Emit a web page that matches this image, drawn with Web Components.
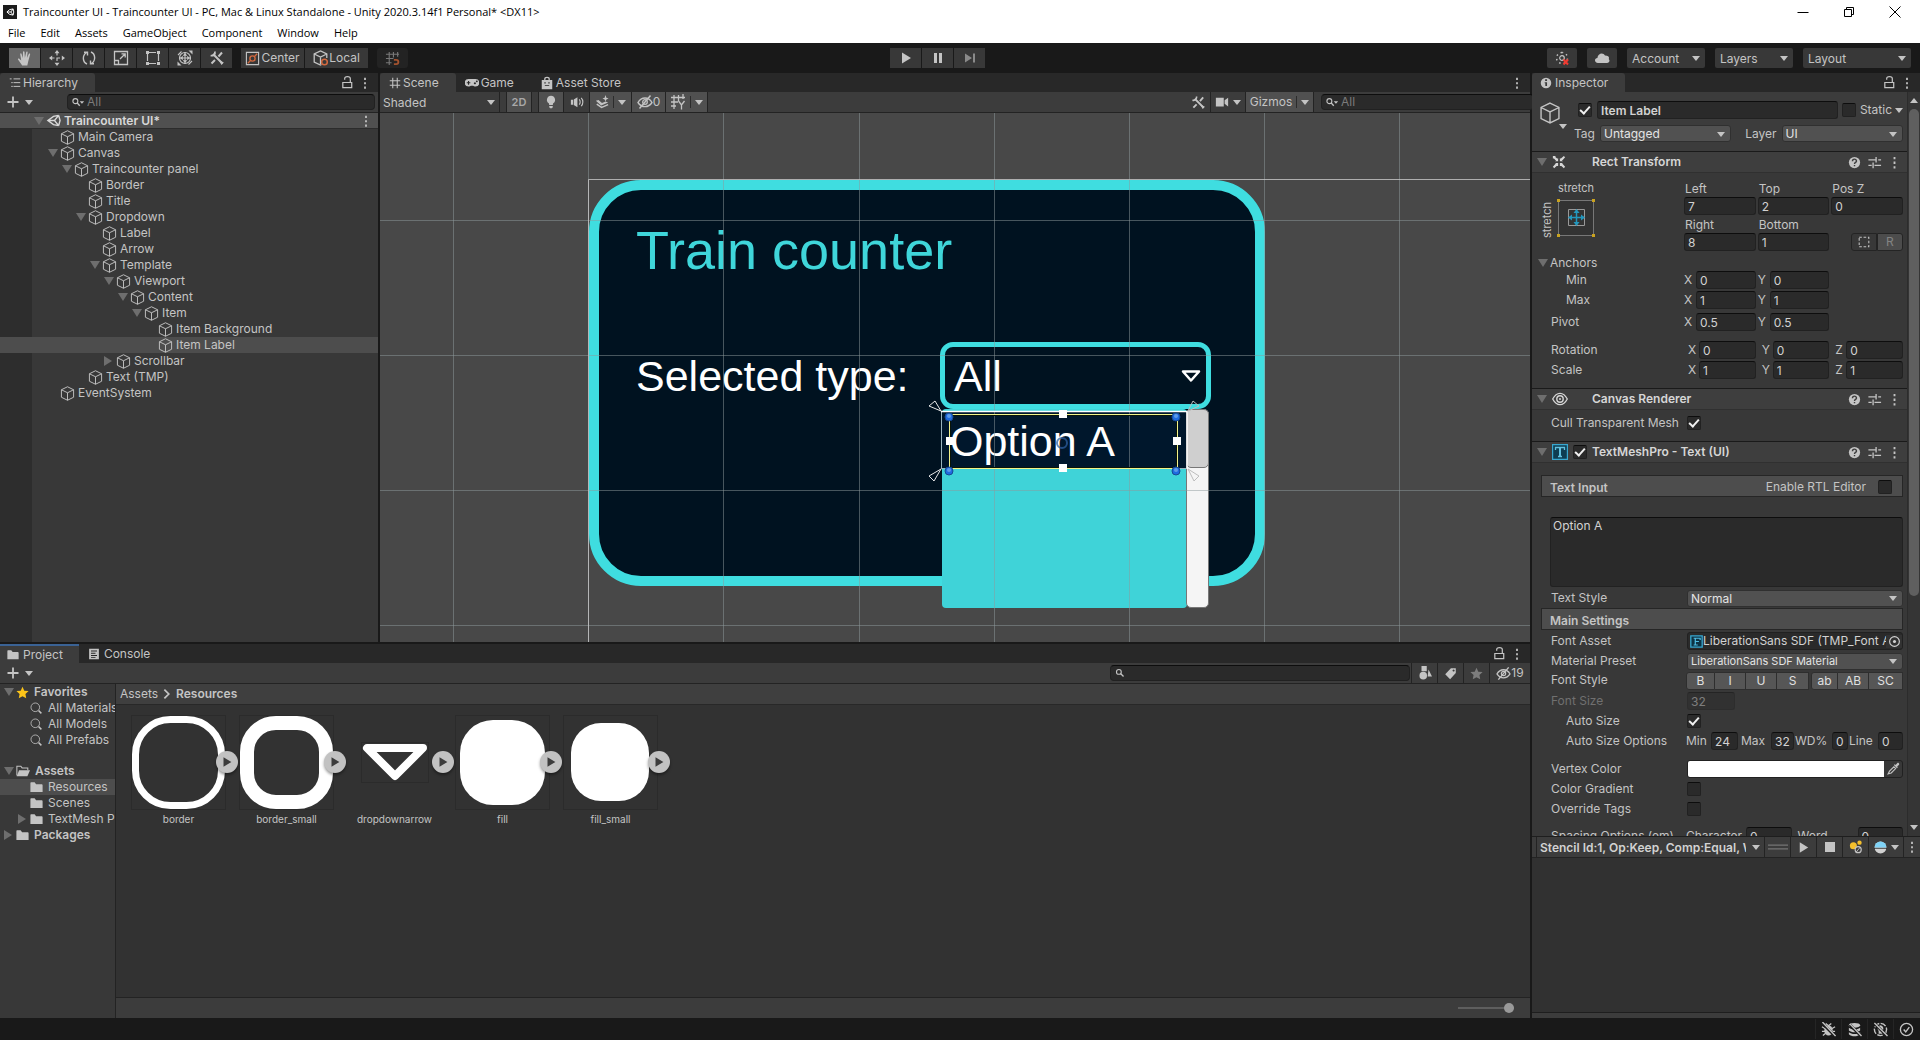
<!DOCTYPE html>
<html lang="en">
<head>
<meta charset="utf-8">
<title>Traincounter UI - Unity</title>
<style>
html,body{margin:0;height:100%;background:#191919}
body{font-family:Inter,"Liberation Sans",sans-serif;font-size:12px;line-height:16px;color:#c4c4c4;overflow:hidden}
</style>
</head>
<body>
<unity-editor></unity-editor>
<script>
const BASE = `
*{box-sizing:border-box}
button,input,select,textarea{font:inherit;color:inherit;border:0;padding:0;margin:0;background:none;border-radius:0;outline:0;min-width:0}
button{display:inline-flex;align-items:center;justify-content:center;white-space:nowrap}
select{appearance:none;width:100%}
svg{display:block}
`;
function define(name, css, render) {
  customElements.define(name, class extends HTMLElement {
    constructor() { super(); this.attachShadow({ mode: 'open' }); }
    connectedCallback() {
      this.shadowRoot.innerHTML = `<style>${BASE}${css}</style>${render(this)}`;
    }
  });
}
const attr = (el, n, d = '') => el.getAttribute(n) ?? d;

const s = 'fill="none" stroke="currentColor"';
const ICONS = {
  hand: '<path fill="currentColor" d="M5.2 15.5 1 9.6c-.4-.8.7-1.5 1.3-.9l1.9 1.9L3.200 4.200c-.1-1 1.2-1.200 1.400-.3L5.800 7.900 6 2c0-1 1.400-1 1.500 0l.4 5.700L9.200 2.200c.2-1 1.600-.7 1.400.3L9.900 8l1.900-4c.4-.9 1.600-.4 1.300.5l-1.900 7-.9 4z"/>',
  move: `<path ${s} stroke-width="1.200" stroke-dasharray="3.500 2" d="M8 2v12M2 8h12"/><path fill="currentColor" d="M8 0l2.500 3.200h-5zM8 16l2.500-3.200h-5zM0 8l3.200-2.500v5zM16 8l-3.200-2.500v5z"/>`,
  rotate: `<path ${s} stroke-width="1.400" d="M6 14C1.500 12 1 5.500 5.500 2.500M10 2c4.500 2 5 8.500.5 11.500M3 2.200h3.500v3.300M13 13.800H9.500v-3.300"/>`,
  scale: `<path ${s} stroke-width="1.300" d="M1.500 1.500h13v13h-13zM1.500 10.500h4v4M7 9l5-5M8.500 3.800h3.700v3.700"/>`,
  rect: `<path ${s} stroke-width="1.200" d="M3 2.500h10M3 13.500h10M2.500 3v10M13.500 3v10" stroke-dasharray="8 2"/><path fill="currentColor" d="M1 1h3v3H1zM12 1h3v3h-3zM1 12h3v3H1zM12 12h3v3h-3z"/>`,
  multi: `<circle cx="8" cy="8" r="5.500" ${s} stroke-width="1.200"/><path ${s} stroke-width="1.100" d="M8 2v12M2 8h12M1 5 4.500 1.500M15 11l-3.500 3.500"/><path fill="currentColor" d="M8 3l2.300 2.800H5.700zM8 13l2.300-2.800H5.700zM3 8l2.800-2.300v4.600zM13 8l-2.800-2.300v4.600zM11.500.5H15.500v4zM.5 11.500v4h4z"/>`,
  tools: `<path ${s} stroke-width="2" d="M4 4l9.500 9.500M13 2.500l-3.500 4M6 10l-3.500 3.500"/><path ${s} stroke-width="1.800" d="M5.800 1.500c.8 2.500-1.500 4.800-4.200 4"/><path fill="currentColor" d="M9.500 9.800 14.800 12.500 12.500 15z"/>`,
  center: `<path ${s} stroke-width="1.200" d="M1.500 1.500h13v13h-13z"/><circle cx="8" cy="8" r="2.800" fill="none" stroke="#d3693f" stroke-width="1.500"/><path stroke="#d3693f" stroke-width="1.400" d="M10 6l3-3M3 13l3-3"/>`,
  local: `<path ${s} stroke-width="1.300" d="M8.500 14.500 7.500 15 1.200 12V4L7.500 1l6.300 3v4M1.200 4l6.300 3 6.300-3M7.500 7v7"/><circle cx="11.500" cy="12" r="2.800" fill="none" stroke="#d3693f" stroke-width="1.500"/>`,
  snap: `<path fill="none" stroke="#787878" stroke-width="1.200" d="M4.500 1v14M9 1v6M13.500 1v5M1 3.500h14M1 8h8M1 12.500h6"/><path fill="none" stroke="#a4532f" stroke-width="2" d="M9.500 9.500h2.500c3 0 3 4.500 0 4.500H9.500"/>`,
  play: '<path fill="currentColor" d="M4 2.500 13 8l-9 5.500z"/>',
  pause: '<path fill="currentColor" d="M4 3h3v10H4zM9 3h3v10H9z"/>',
  step: '<path fill="#8a8a8a" d="M3 3.500 10 8l-7 4.500zM11 3.500h2v9h-2z"/>',
  stop: '<path fill="currentColor" d="M3 3h10v10H3z"/>',
  lightx: `<circle cx="8" cy="8" r="2.300" ${s} stroke-width="1.200"/><path ${s} stroke-width="1.500" stroke-dasharray="1.500 3.200" d="M8 2.500a5.500 5.500 0 1 0 .1 0"/><path stroke="#f03a30" stroke-width="2" d="M9.500 9.500l4.500 5M14 9.500l-4.500 5"/>`,
  cloud: '<path fill="currentColor" d="M4 13c-4-.2-3.800-5-.6-5C3.800 3 9.500 2 11 5.600c4 0 4.500 2 3.700 3.500C16.500 11 15 13 13 13z"/>',
  hier: `<path ${s} stroke-width="1.300" d="M1 2.500h2.500M6 2.500h9M6 7.500h9M6 12.500h9M3 7.500h2M3 12.500h2"/>`,
  lock: `<path ${s} stroke-width="1.300" d="M3 8h9.500v5.500H3zM5 5V3.800C5 .9 11 .9 11 3.800V8"/>`,
  kebab: '<path fill="currentColor" d="M7 2h2v2.500H7zM7 7h2v2.500H7zM7 12h2v2.500H7z"/>',
  plus: '<path stroke="currentColor" stroke-width="1.800" d="M8 2.500v11M2.500 8h11"/>',
  search: `<circle cx="6.500" cy="6.500" r="3.200" ${s} stroke-width="1.500"/><path ${s} stroke-width="1.800" d="M8.700 8.700l4 4"/>`,
  searchv: `<circle cx="5" cy="7" r="2.800" ${s} stroke-width="1.300"/><path ${s} stroke-width="1.600" d="M7 9l3 3.200"/><path fill="currentColor" d="M10 7h5l-2.500 3z"/>`,
  searchbig: `<circle cx="6.500" cy="6.500" r="5.300" ${s}/><path ${s} stroke-width="1.800" d="M10.500 10.500l3.500 3.500"/>`,
  cube: `<path ${s} d="M8 .8 14.500 4v8L8 15.200 1.500 12V4zM1.500 4 8 7.200 14.500 4M8 7.200v8"/>`,
  unity: `<path ${s} stroke-width="1.500" d="M13.500 2.500 8 3.600 2 8l6 4.400 5.500 1.100M13.500 2.500 15 8l-1.500 5.500M2 8h7M13.500 2.500 9 8l4.500 5.500"/>`,
  grid: `<path ${s} stroke-width="1.400" d="M5 1v14M11 1v14M1 5h14M1 11h14"/>`,
  game: '<path fill="currentColor" fill-rule="evenodd" d="M4 3.500h8a4.300 4.300 0 0 1 0 8.600c-1.500 0-2-1-2.700-1H6.700c-.7 0-1.200 1-2.700 1a4.300 4.300 0 0 1 0-8.600zM3.400 5.600v1.500H2v1.300h1.400v1.500h1.300V8.400h1.400V7.100H4.700V5.600zM11.300 7a1.200 1.200 0 1 0 .01 0zM13.500 5a1 1 0 1 0 .01 0z"/>',
  bag: `<path ${s} stroke-width="1.500" d="M5.500 5V3.500c0-2.500 5-2.500 5 0V5"/><path fill="currentColor" fill-rule="evenodd" d="M2 4.500h12V15H2zM5 7v1.500h1.500V7zM9.500 7v1.500H11V7zM5.500 10.500v1h5v-1z"/>`,
  bulb: '<path fill="currentColor" d="M8 1a4.600 4.600 0 0 1 2.500 8.500L10 11.500H6L5.500 9.500A4.600 4.600 0 0 1 8 1zM6 12.500h4V14L9 15H7l-1-1z"/>',
  audio: `<path fill="currentColor" d="M1 5.500h2.500V11H1zM4.300 5 8.500 2.500V14L4.300 11.500z"/><path ${s} stroke-width="1.300" d="M10.500 5c1.500 1.500 1.500 4.500 0 6M12.800 3.300c2.500 2.500 2.500 7 0 9.500"/>`,
  fx: `<path fill="currentColor" d="M1 6.500 4 5.800 8 9l4-1.500 3 1L7 12zM12 0l1 3 2.500 1L13 5l-1 2.500L11 5 8.500 4 11 3z"/><path ${s} stroke-width="1.600" d="M2 10.500l5.500 3.700L15 11"/>`,
  eyeoff: `<path ${s} stroke-width="1.400" d="M1 8.500c3.500-6 10.500-6 14 0-3.500 5.500-10.500 5.500-14 0z"/><circle cx="8" cy="8" r="2.300" ${s} stroke-width="1.300"/><path ${s} stroke-width="1.500" d="M13.500 1.500l-11 13"/>`,
  gridy: `<path ${s} stroke-width="1.300" d="M4 1v14M8.500 1v6M13 0v5M1 3.500h14M1 8h7M1 12h5M8.500 7l3 4 3-4M11.500 11v4.500"/>`,
  camera: '<path fill="currentColor" d="M1 3h9v10H1zM11 6l4-3v10l-4-3z"/>',
  info: '<circle cx="8" cy="8" r="6" fill="currentColor"/><path fill="#3c3c3c" d="M7 3.800h2.200v2H7zM6.500 7h2.700v4.500h-2V8.200h-.7z"/>',
  help: `<circle cx="8" cy="8" r="6" fill="currentColor"/><path fill="none" stroke="#3e3e3e" stroke-width="1.500" d="M5.800 6.600c0-3 4.400-2.700 4.300-.1C10 8 8 7.900 8 9.500M8 10.600v1.500"/>`,
  preset: `<path ${s} stroke-width="1.400" d="M1.500 5.200H9M12 5.200h3M9.700 2v6M1.500 11H5M8 11h7M6.500 8v6"/>`,
  rectt: '<path fill="currentColor" d="M2.500 1 6.800 4.800 4.800 6.800 1 2.500zM1 1h3v1L2 4H1zM13.500 1 9.200 4.800l2 2L15 2.500zM2.500 15l4.300-3.800-2-2L1 13.500zM13.500 15l-4.300-3.800 2-2 3.800 4.300zM7 3.500v3.500H3.500zM9 3.500v3.500h3.500zM7 12.500V9H3.500zM9 12.500V9h3.500z"/>',
  eye: `<path ${s} stroke-width="1.300" d="M.7 8C3 3.600 5.500 2.300 8 2.300S13 3.600 15.300 8C13 12.400 10.500 13.700 8 13.700S3 12.400.7 8z"/><circle cx="8" cy="8" r="3.200" ${s} stroke-width="1.400"/><circle cx="8" cy="8" r="1" fill="currentColor"/>`,
  tmp: '<path fill="#0d3d52" stroke="#38a8d0" stroke-width="1.200" d="M.6.600h14.800v14.800H.6z"/><path fill="none" stroke="#62c0de" stroke-width="1.300" d="M3.500 6V3.500h9V6M6 12.500h4"/><path stroke="#62c0de" stroke-width="2" d="M8 3.500v9"/>',
  fasset: '<path fill="#0d3344" stroke="#38a8d0" stroke-width="1.600" d="M1 1h14v14H1z"/><path fill="none" stroke="#4fbce2" stroke-width="1.500" d="M12.500 6V4H4.500M6.500 4v8M4.500 12.300h5M6.500 8H11"/>',
  target: `<circle cx="8" cy="8" r="6" ${s} stroke-width="1.400"/><circle cx="8" cy="8" r="1.900" fill="currentColor"/>`,
  picker: `<path ${s} stroke-width="1.300" d="M2.500 13.500 4 10.500l5-5 2 2-5 5z"/><path fill="currentColor" d="M9 3.500l3.500 3.500 1-1-.7-.8L15 3c.5-1.500-1-2.500-2-2l-2 2.300-.9-.8z"/>`,
  dots: `<circle cx="5" cy="6.500" r="4" fill="#f5c02c"/><circle cx="12" cy="3" r="2.500" fill="#f5c02c"/><circle cx="10.500" cy="11" r="3.500" ${s} stroke-width="1.300"/><path ${s} d="M8 14l5-6"/>`,
  ball: '<circle cx="8" cy="8" r="7.300" fill="#d2d2d2"/><path fill="#7fd3f7" d="M.7 8a7.300 7.300 0 0 1 14.600 0z"/><path stroke="#242424" d="M0 9h16"/>',
  grip: '<path stroke="#747474" d="M0 6.500h16M0 9.500h16"/>',
  folder: '<path fill="currentColor" d="M.5 3c0-1 .4-1.400 1.200-1.400h4L7.500 4H14c1 0 1.500.5 1.500 1.300v8.200H.5z"/>',
  folderopen: `<path ${s} stroke-width="1.200" d="M1 13V2.500h4.500l1.500 2h6.500V7"/><path fill="currentColor" d="M3.500 7H16l-3 7H.8z"/>`,
  console: '<path fill="currentColor" fill-rule="evenodd" d="M1.500 1h13v14h-13zM4 3.300v1.400h8V3.300zM4 6.300v1.400h6V6.300zM4 9.300v1.400h8V9.300zM4 12.200v1.200h6v-1.200z"/>',
  star: '<path fill="currentColor" d="M8 .8l2.200 4.900 5.300.6-3.900 3.600 1 5.300L8 12.600l-4.600 2.600 1-5.300L.5 6.300l5.300-.6z"/>',
  shapes: '<path fill="currentColor" d="M4 0h6v6H4z"/><circle cx="6" cy="11" r="4.300" fill="currentColor"/><path fill="currentColor" d="M12 4l4 8h-5z"/>',
  tag: '<path fill="currentColor" fill-rule="evenodd" d="M14.500 1.500v6l-7 7.500L1.500 9 8.500 1.500zM11.800 3a1.300 1.300 0 1 0 .01 0z"/>',
  dashed: `<path ${s} stroke-width="1.200" stroke-dasharray="3 2" d="M2.500 2.500h11v11h-11z"/>`,
  bug: `<ellipse cx="8" cy="9" rx="4.500" ry="5.500" fill="currentColor"/><path ${s} stroke-width="1.400" d="M1 5l4 2.500M1 10h4M2 14.500 5 12M15 5l-4 2.500M15 10h-4M14 14.500 11 12M5 1.500 8 4l3-2.500"/><path stroke="#191919" stroke-width="3" d="M1 1l14 14"/><path ${s} stroke-width="1.500" d="M1.500 0l14 15"/>`,
  cache: `<ellipse cx="8" cy="3.500" rx="6" ry="2.500" fill="currentColor"/><path fill="currentColor" d="M2 6c3 2.500 9 2.500 12 0v3c-3 2.500-9 2.500-12 0zM2 11c3 2.500 9 2.500 12 0v2c-3 3-9 3-12 0z"/><path stroke="#191919" stroke-width="3" d="M3 3l12 12"/><path ${s} stroke-width="1.500" d="M3 2l12.500 13"/>`,
  lightoff: `<circle cx="8" cy="8" r="6.500" ${s} stroke-width="1.500" stroke-dasharray="6 1.500"/><path fill="currentColor" d="M8 3.500a3.500 3.500 0 0 1 2 6v3H6v-3a3.500 3.500 0 0 1 2-6z"/><path stroke="#191919" stroke-width="3" d="M1 1l14 14"/><path ${s} stroke-width="1.500" d="M1.500 1l14 14"/>`,
  ok: `<circle cx="8" cy="8" r="6.500" ${s} stroke-width="1.400"/><path ${s} stroke-width="1.500" d="M5 8l2.200 2.500L11 5.500"/>`,
  min: `<path ${s} d="M2.500 8.500h11"/>`,
  restore: `<path ${s} d="M3.500 5.500h7v7h-7zM5.500 5.500v-2h7v7h-2"/>`,
  close: `<path ${s} d="M2.500 2.500l11 11M13.500 2.500l-11 11"/>`,
  applogo: '<path fill="#1b1b1b" d="M0 0h16v16H0z"/><path fill="none" stroke="#fff" stroke-width="1.100" d="M11.500 4.500 7.500 5.300 4.500 8l3 2.700 4 .8M11.500 4.500 12.300 8l-.8 3.500L9 8zM4.500 8H9"/>',
  chevron: `<path ${s} stroke-width="2" d="M5 3l5 5-5 5"/>`
};
ICONS.favstar = ICONS.star.replace('currentColor', '#fcc419');

define('u-icon', `:host{display:inline-flex;flex:none;width:var(--size,16px);height:var(--size,16px)}svg{width:100%;height:100%}`,
  el => `<svg viewBox="0 0 16 16" aria-hidden="true">${ICONS[attr(el, 'name')] || ''}</svg>`);
const icon = (n, size) => `<u-icon name="${n}"${size ? ` style="--size:${size}px"` : ''}></u-icon>`;

define('u-caret', `:host{display:inline-block;flex:none;width:0;height:0;border:4px solid transparent;border-top:5px solid currentColor;border-bottom:0}
:host([dir="right"]){border:5px solid transparent;border-left:8px solid currentColor;border-right:0}
:host([dir="up"]){border-top:0;border-bottom:5px solid currentColor}
:host([dir="tree"]){border:5px solid transparent;border-top:8px solid currentColor;border-bottom:0}`, () => ``);

/* drop-down: a native select under a drawn caret */
define('u-select', `
:host{display:flex;position:relative;min-width:0;height:17px;background:#515151;border:1px solid #303030;border-radius:3px;color:#e4e4e4}
:host([flat]){background:none;border:0;border-radius:0;color:#c4c4c4}
select{padding:0 18px 0 var(--pad,3px);height:100%;line-height:15px}
u-caret{position:absolute;right:var(--caret,5px);top:50%;margin-top:-2px;pointer-events:none;color:#c4c4c4}`,
  el => `<select aria-label="${attr(el, 'label')}"><option>${attr(el, 'value')}</option></select><u-caret></u-caret>`);

define('u-field', `
:host{display:flex;min-width:0}
label{display:flex;align-items:center;flex:1;min-width:0;white-space:nowrap}
:host([stack]) label{flex-direction:column;align-items:stretch}
span{flex:none;width:var(--lw,auto)}
:host([stack]) span{padding-left:1px;line-height:16px}
input{flex:1;width:0;height:18px;padding:0 3px;background:#2a2a2a;border:1px solid #212121;border-top-color:#0d0d0d;border-radius:3px;color:#d2d2d2}
:host([stack]) input{flex:none;width:100%}`,
  el => `<label><span>${attr(el, 'label')}</span><input value="${attr(el, 'value')}"></label>`);

define('u-check', `
:host{display:inline-flex;flex:none;width:14px;height:14px}
input{appearance:none;width:14px;height:14px;background:#2a2a2a;border:1px solid #212121;border-top-color:#0d0d0d;border-radius:2px;display:grid;place-items:center}
input:checked::after{content:"";width:8px;height:4px;border:2px solid #f0f0f0;border-top:0;border-right:0;transform:translateY(-1px) rotate(-48deg)}`,
  el => `<input type="checkbox" aria-label="${attr(el, 'label')}" ${el.hasAttribute('on') ? 'checked' : ''}>`);

define('u-search', `
:host{display:flex;min-width:0}
label{display:flex;align-items:center;flex:1;height:16px;gap:2px;padding-left:3px;background:#2a2a2a;border:1px solid #212121;border-top-color:#0d0d0d;border-radius:4px}
input{flex:1;line-height:14px}input::placeholder{color:#7b7b7b;opacity:1}`,
  el => `<label>${icon(attr(el, 'icon', 'searchv'), attr(el, 'size', '14'))}<input type="text" aria-label="Search" placeholder="${attr(el, 'hint')}"></label>`);

define('u-tabbar', `:host{display:flex;align-items:center;flex:none;height:19px;background:#282828;padding-right:6px}
.end{margin-left:auto;display:flex;align-items:center;gap:3px}`, el => `
<slot></slot><div class="end">${el.hasAttribute('lock') ? `<button aria-label="Lock">${icon('lock', 15)}</button>` : ''}<button aria-label="Options">${icon('kebab', 14)}</button></div>`);
define('u-tab', `:host{display:flex;height:19px}
button{height:19px;gap:2px;padding:1px 17px 0 9px;border-radius:3px 3px 0 0}
:host([active]) button{background:#3c3c3c}
:host([wide]) button{gap:4px}:host([near]) button{padding-left:7px}
:host([focused]) button{border-top:2px solid #3a6294;border-radius:0;padding:0 16px 0 7px}`,
  el => `<button role="tab">${icon(attr(el, 'icon'), attr(el, 'size', '14'))}<slot></slot></button>`);

/* application window frame */
define('window-frame', `
:host{display:block;flex:none;background:#fff;color:#000;font:11px/16px "Open Sans","Noto Sans",sans-serif;height:43px}
.title{display:flex;align-items:center;height:23px;padding-left:3px;gap:6px}
.ctl{margin-left:auto;display:flex;padding-right:2px}.ctl button{width:46px}
nav{display:flex;gap:15px;padding:2px 8px 0}`, () => `
<div class="title">${icon('applogo', 14)}<span>Traincounter UI - Traincounter UI - PC, Mac &amp; Linux Standalone - Unity 2020.3.14f1 Personal* &lt;DX11&gt;</span>
<div class="ctl"><button aria-label="Minimize">${icon('min')}</button><button aria-label="Restore">${icon('restore')}</button><button aria-label="Close">${icon('close')}</button></div></div>
<nav>${['File', 'Edit', 'Assets', 'GameObject', 'Component', 'Window', 'Help'].map(t => `<button>${t}</button>`).join('')}</nav>`);

define('main-toolbar', `
:host{display:grid;grid-template-columns:minmax(0,881fr) auto minmax(0,926fr);align-items:center;flex:none;height:30px;background:#191919;padding:0 9px}
.g{display:flex;gap:1px}.left,.right{display:flex;align-items:center;gap:9px}.right{justify-content:flex-end;gap:10px}
button{height:20px;width:31px;background:#383838;color:#c4c4c4}
button.on{background:#676767}button.t{width:63px}button.t:first-child{gap:1px}button.sq{width:30px;border-radius:2px}
button.snap{background:#232323;border-radius:3px}
u-select{height:20px;width:78px;background:#383838;border:0;border-radius:2px;color:#c4c4c4;--pad:5px}
u-select.w{width:108px}`, () => `
<div class="left"><div class="g">${['hand', 'move', 'rotate', 'scale', 'rect', 'multi', 'tools'].map((n, i) => `<button aria-label="${n}" class="${i ? '' : 'on'}">${icon(n)}</button>`).join('')}</div>
<div class="g"><button class="t">${icon('center', 15)}Center</button><button class="t">${icon('local')}Local</button></div>
<button class="snap" aria-label="Snap">${icon('snap', 15)}</button></div>
<div class="g">${['play', 'pause', 'step'].map(n => `<button aria-label="${n}">${icon(n)}</button>`).join('')}</div>
<div class="right"><button class="sq" aria-label="Services">${icon('lightx')}</button><button class="sq" aria-label="Cloud">${icon('cloud')}</button>
<u-select label="Account" value="Account"></u-select><u-select label="Layers" value="Layers"></u-select><u-select class="w" label="Layout" value="Layout"></u-select></div>`);

/* hierarchy */
define('tree-node', `
:host{display:flex;align-items:center;height:16px;white-space:nowrap;padding-left:calc(var(--depth,0)*14px + var(--base,46px));overflow:hidden}
.tw{width:14px;flex:none;display:flex;color:#6e6e6e;padding-left:2px}
:host([bold]){font-weight:600}
.lab{padding-left:var(--gap,3px)}
:host([sel]){background:#4d4d4d}`, el => `
<span class="tw">${el.hasAttribute('open') ? '<u-caret dir="tree"></u-caret>' : el.hasAttribute('shut') ? '<u-caret dir="right"></u-caret>' : ''}</span>${icon(attr(el, 'icon', 'cube'), attr(el, 'isize', '15'))}<span class="lab"><slot></slot></span>`);

const NODES = [['Main Camera', 0], ['Canvas', 0, 'open'], ['Traincounter panel', 1, 'open'], ['Border', 2], ['Title', 2], ['Dropdown', 2, 'open'], ['Label', 3], ['Arrow', 3], ['Template', 3, 'open'], ['Viewport', 4, 'open'], ['Content', 5, 'open'], ['Item', 6, 'open'], ['Item Background', 7], ['Item Label', 7, 'sel'], ['Scrollbar', 4, 'shut'], ['Text (TMP)', 2], ['EventSystem', 0]];
define('hierarchy-panel', `
:host{display:flex;flex-direction:column;min-height:0;background:#383838;border-right:2px solid #191919}
.bar{display:flex;align-items:center;flex:none;height:21px;background:#3c3c3c;border-bottom:1px solid #232323;padding:0 3px 0 5px}
.bar button{gap:4px;margin-right:34px}.bar u-search{flex:1}
.scene{display:flex;align-items:center;height:16px;background:#505050;border-bottom:1px solid #2c2c2c;padding-right:5px;flex:none}
.scene tree-node{flex:1;color:#d8d8d8}
.tree{flex:1;min-height:0;background:linear-gradient(90deg,#2d2d2d 32px,#383838 32px)}`, () => `
<u-tabbar lock><u-tab active icon="hier" size="12">Hierarchy</u-tab></u-tabbar>
<div class="bar"><button aria-label="Create">${icon('plus')}<u-caret></u-caret></button><u-search hint="All"></u-search></div>
<div class="scene"><tree-node bold open icon="unity" style="--base:32px">Traincounter UI*</tree-node>${icon('kebab', 14)}</div>
<div class="tree" role="tree">${NODES.map(([t, d, f]) => `<tree-node ${f || ''} style="--depth:${d}">${t}</tree-node>`).join('')}</div>`);

/* scene */
define('scene-toolbar', `
:host{display:flex;align-items:center;flex:none;height:21px;background:#3c3c3c;border-bottom:1px solid #232323;padding-right:3px}
button{height:20px;width:25px;border-right:1px solid #232323}
.on{background:#505050}.sp{width:7px;height:20px;border-right:1px solid #232323;flex:none}
u-select{width:120px;height:20px;border-right:1px solid #232323;--caret:4px}
.two{font-weight:600;font-size:11px;color:#a8a8a8}.au{width:26px}
.dd{width:42px;gap:4px}.e{width:34px}.cam{width:35px;gap:4px}.giz{width:68px;gap:4px}
i{width:1px;height:12px;background:#2c2c2c}
.end{margin-left:auto;display:flex;align-items:center}u-search{width:206px;margin-left:7px}`, () => `
<u-select flat label="Draw mode" value="Shaded"></u-select><span class="sp"></span>
<button class="on two">2D</button><span class="sp"></span><button class="on" aria-label="Lighting">${icon('bulb', 14)}</button><button class="au" aria-label="Audio">${icon('audio', 14)}</button>
<button class="on dd" aria-label="Effects">${icon('fx', 14)}<i></i><u-caret></u-caret></button><button class="on e">${icon('eyeoff')}0</button><button class="on dd" aria-label="Grid">${icon('gridy')}<i></i><u-caret></u-caret></button>
<div class="end"><button aria-label="Tools">${icon('tools', 15)}</button><button class="cam" aria-label="Camera">${icon('camera', 14)}<u-caret></u-caret></button><button class="on giz">Gizmos<i></i><u-caret></u-caret></button><u-search hint="All"></u-search></div>`);

const range = (a, step, n) => Array.from({ length: n }, (_, i) => Math.round(a + step * i));
define('scene-canvas', `
:host{display:block;position:relative;flex:1;min-height:0;overflow:hidden;background:#484848;font-family:"Liberation Sans",Arial,sans-serif;color:#fff;font-size:43px;line-height:48px}
.o{position:absolute;white-space:nowrap}
.panel{left:209px;top:67px;width:676px;height:406px;border:10px solid #3fdde0;border-radius:52px;background:#001220}
.title{left:256px;top:107px;font-size:54px;line-height:60px;color:#3fd6da}
.sel{left:256px;top:239px}
.drop{left:560px;top:229px;width:271px;height:67px;border:5px solid #3fdde0;border-radius:13px;background:#001220}
.all{left:574px;top:239px}
.list{left:562px;top:296px;width:245px;height:199px;background:#3fd3d8;border-radius:4px}
.track{left:806px;top:296px;width:23px;height:199px;background:#f5f5f5;border-radius:5px;border:1px solid #777}
.thumb{left:806px;top:296px;width:23px;height:59px;background:#cfcfcf;border-radius:5px;border:1px solid #777}
.item{left:562px;top:299px;width:244px;height:57px;background:#00172c}
.opt{left:570px;top:304px}
svg{position:absolute;inset:0;width:100%;height:100%}`, () => {
  const vx = range(73, 135.2, 14).map(x => `<path d="M${x + .5} 0v2000"/>`).join('');
  const hy = range(107, 135, 9).map(y => `<path d="M0 ${y + .5}h4000"/>`).join('');
  const sq = [[683, 301], [683, 355], [570, 328], [797, 328]].map(([x, y]) => `<path d="M${x - 4} ${y - 4}h8v8h-8z"/>`).join('');
  const dots = [[569, 304], [796, 304], [569, 358], [796, 358]].map(([x, y]) => `<circle cx="${x}" cy="${y}" r="4"/><circle cx="${x}" cy="${y - 1}" r="2" fill="#5d9be8" stroke="none"/>`).join('');
  return `
<div class="o panel"></div><div class="o title">Train counter</div><div class="o sel">Selected type:</div>
<div class="o drop"></div><div class="o all">All</div><div class="o list"></div><div class="o track"></div><div class="o thumb"></div><div class="o item"></div><div class="o opt">Option A</div>
<svg aria-hidden="true">
<path d="M803 258.500h16l-8 9z" fill="none" stroke="#fff" stroke-width="2.500" stroke-linejoin="round"/>
<g stroke="#8d9a9c" stroke-opacity=".5">${vx}${hy}</g>
<path d="M208.500 2000V66.500H4000" fill="none" stroke="#c8c8c8" stroke-opacity=".8"/>
<path d="M561.500 299v57M561 355.500h246" fill="none" stroke="#9ab4bd"/><path d="M561 298.500h246v57" fill="none" stroke="#fff" stroke-width="1.500"/>
<path d="M570.500 302.500h226v52h-226z" fill="none" stroke="#0a1408"/><path d="M569.500 301.500h228v54h-228z" fill="none" stroke="#f2f28a"/>
<g fill="none" stroke="#e8e8e8"><path d="M561 298l-12-5 6-5zM561 356l-12 7 5 5z"/><path d="M808 298l5-10 6 5zM808 356l11 7-5 5z" stroke="#bdbdbd"/></g>
<circle cx="682" cy="330" r="5" fill="none" stroke="#2d5f9f" stroke-opacity=".75" stroke-width="2"/>
<g fill="#fff">${sq}</g><g fill="#1f6be0" stroke="#174a94">${dots}</g></svg>`;
});
define('scene-panel', `:host{display:flex;flex-direction:column;min-width:0;min-height:0}`, () => `
<u-tabbar><u-tab active icon="grid" size="12">Scene</u-tab><u-tab icon="game">Game</u-tab><u-tab icon="bag">Asset Store</u-tab></u-tabbar>
<scene-toolbar></scene-toolbar><scene-canvas></scene-canvas>`);

/* project */
define('asset-tile', `
:host{display:flex;flex-direction:column;align-items:center;width:93px;font-size:10px;line-height:12px;position:relative}
.box{width:93px;height:93px;display:grid;place-items:center;margin-bottom:4px}
.box svg{outline:1px solid #2b2b2b}
.sub{position:absolute;left:84px;top:35px;width:22px;height:22px;border-radius:50%;background:#c2c2c2;color:#3c3c3c;box-shadow:0 2px 3px #0006}`, el => {
  const k = attr(el, 'kind');
  const art = {
    border: '<rect x="3.500" y="3.500" width="86" height="86" rx="35" fill="none" stroke="#fff" stroke-width="7"/>',
    small: '<rect x="7" y="7" width="79" height="79" rx="29" fill="none" stroke="#fff" stroke-width="14"/>',
    fill: '<rect x="4" y="4" width="85" height="85" rx="33" fill="#fff"/>',
    fills: '<rect x="7" y="7" width="78" height="78" rx="30" fill="#fff"/>'
  }[k];
  return `<div class="box">${art ? `<svg width="93" height="93" viewBox="0 0 93 93">${art}</svg>` :
    '<svg width="66" height="39" viewBox="0 0 66 39"><path d="M5 5h56L33 33z" fill="none" stroke="#fff" stroke-width="8" stroke-linejoin="round"/></svg>'}</div>
<slot></slot><button class="sub" aria-label="Expand">${icon('play', 14)}</button>`;
});
define('project-panel', `
:host{display:flex;flex-direction:column;min-height:0;border-top:2px solid #191919;border-right:2px solid #191919;background:#323232}
:host{grid-column:1/3}
.bar{display:flex;align-items:center;flex:none;height:21px;background:#3c3c3c;border-bottom:1px solid #232323;padding-left:5px}
.bar .add{gap:4px}.bar u-search{margin-left:auto;width:300px;margin-right:1px}
.f{height:20px;width:26px;border-left:1px solid #232323}.f.n{width:41px}.f.dim{color:#7d7d7d}
.body{display:grid;grid-template-columns:116px 1fr;flex:1;min-height:0}
.side{background:#383838;border-right:1px solid #232323;overflow:hidden}
.side tree-node{--gap:5px}.gapy{height:15px}
.main{display:flex;flex-direction:column;min-width:0}
.crumb{display:flex;align-items:center;gap:2px;height:21px;background:#3f3f3f;border-bottom:1px solid #282828;padding-left:4px;flex:none}
.crumb b{font-weight:600}
.tiles{display:flex;flex:1;gap:15px;padding:11px 16px}
.foot{display:flex;justify-content:flex-end;align-items:center;height:21px;background:#3c3c3c;border-top:1px solid #232323;padding-right:16px;flex:none}
input[type=range]{appearance:none;width:56px;height:10px}
input[type=range]::-webkit-slider-runnable-track{height:2px;background:#5e5e5e}
input[type=range]::-webkit-slider-thumb{appearance:none;width:10px;height:10px;margin-top:-4px;border-radius:50%;background:#999}`, () => `
<u-tabbar lock><u-tab active focused wide icon="folder" size="12">Project</u-tab><u-tab wide icon="console" size="12">Console</u-tab></u-tabbar>
<div class="bar"><button class="add" aria-label="Create">${icon('plus')}<u-caret></u-caret></button><u-search icon="search" size="12"></u-search>
<button class="f" aria-label="Filter by type">${icon('shapes', 14)}</button><button class="f" aria-label="Filter by label">${icon('tag', 13)}</button><button class="f dim" aria-label="Favorite">${icon('star', 13)}</button><button class="f n">${icon('eyeoff', 15)}19</button></div>
<div class="body"><div class="side" role="tree">
<tree-node bold open icon="favstar" isize="13" style="--base:2px">Favorites</tree-node>
${['Materials', 'Models', 'Prefabs'].map(t => `<tree-node icon="searchbig" isize="13" style="--base:16px">All ${t}</tree-node>`).join('')}
<div class="gapy"></div>
<tree-node bold open icon="folderopen" style="--base:2px" isize="14">Assets</tree-node>
<tree-node icon="folder" isize="13" style="--base:16px" sel>Resources</tree-node><tree-node icon="folder" isize="13" style="--base:16px">Scenes</tree-node>
<tree-node shut icon="folder" isize="13" style="--base:16px">TextMesh P</tree-node><tree-node bold shut icon="folder" isize="13" style="--base:2px">Packages</tree-node></div>
<div class="main"><div class="crumb"><span>Assets</span>${icon('chevron', 14)}<b>Resources</b></div>
<div class="tiles"><asset-tile kind="border">border</asset-tile><asset-tile kind="small">border_small</asset-tile><asset-tile kind="arrow">dropdownarrow</asset-tile><asset-tile kind="fill">fill</asset-tile><asset-tile kind="fills">fill_small</asset-tile></div>
<div class="foot"><input type="range" aria-label="Icon size" value="100"></div></div></div>`);

/* inspector */
define('component-head', `
:host{display:flex;align-items:center;height:22px;background:#3e3e3e;border-top:1px solid #1a1a1a;border-bottom:1px solid #303030;padding:0 5px;color:#d6d6d6}
.tw{color:#6e6e6e;width:15px;display:flex}
.ic{display:flex;gap:5px;align-items:center;width:40px}
b{font-weight:600;flex:1}.end{display:flex;gap:5px;color:#c4c4c4}`, el => `
<span class="tw"><u-caret dir="tree"></u-caret></span><span class="ic">${icon(attr(el, 'icon'), attr(el, 'isize', '16'))}${el.hasAttribute('toggle') ? '<u-check on label="Enabled"></u-check>' : ''}</span><b><slot></slot></b>
<span class="end">${icon('help', 15)}${icon('preset', 15)}${icon('kebab', 15)}</span>`);

const vec = (vals, cls = '') => `<div class="v ${cls}">${vals.map((v, i) => `<u-field label="${'XYZ'[i]}" value="${v}"></u-field>`).join('')}</div>`;
define('inspector-panel', `
:host{display:flex;flex-direction:column;min-height:0;background:#383838}
.view{display:grid;grid-template-columns:1fr 13px;flex:1;min-height:0}
.scroll{overflow:hidden;min-width:0}
.rail{background:#353535;border-left:1px solid #2c2c2c;display:flex;flex-direction:column;align-items:center;padding:6px 0}
.rail i{width:10px;height:487px;background:#5f5f5f;border-radius:5px;margin:6px 0 auto}
.head{display:grid;grid-template-columns:46px 1fr;height:59px;padding:9px 4px 0 7px;background:#3c3c3c}
.cube{display:flex;align-items:flex-start;padding-top:1px}.cube u-caret{margin:22px 0 0 -2px}
.l1{display:flex;align-items:center;height:18px;gap:4px;margin-left:-7px}.l1 u-field{flex:1;font-weight:600;margin-left:1px}.l1 button{gap:3px}
.l2{display:flex;align-items:center;height:17px;gap:5px;margin-top:6px;margin-left:-11px}.l2 u-select:nth-of-type(1){flex:131;margin-right:9px}.l2 u-select{flex:121}
.row{display:grid;grid-template-columns:136px 1fr;align-items:center;height:18px;padding:0 4px 0 19px;margin-top:2px;white-space:nowrap}
.row>*{min-width:0}
.row.r{grid-template-columns:133px 1fr}
.row.in>:first-child{padding-left:15px}
.anch{display:flex;align-items:center;height:18px;margin-top:2px;padding:1px 0 0 6px;gap:2px}.anch u-caret{color:#6e6e6e}
.v{display:grid;grid-template-columns:repeat(3,1fr);gap:2px;--lw:12px}
.v.t{--lw:11px}.v.t u-field{padding-left:4px}
.top{display:grid;grid-template-columns:133px 1fr;padding:8px 4px 0 19px}
.xyz{display:grid;grid-template-columns:repeat(3,1fr);gap:2px}
.pair{display:grid;grid-template-columns:1fr 1fr;align-self:end;width:52px;height:18px;justify-self:end}
.pair button{border:1px solid #242424;border-radius:3px 0 0 3px}.pair button+button{background:#4c4c4c;color:#838383;border-radius:0 3px 3px 0}
.anchor{display:grid;grid-template-columns:auto 1fr;grid-template-rows:14px 1fr;font-size:11px;line-height:14px;margin-left:-11px;align-content:start}
.anchor .vert{writing-mode:vertical-rl;transform:rotate(180deg);grid-row:2;align-self:start;margin-top:5px;height:38px}
.anchor .hz{grid-column:2;padding-left:4px}.anchor svg{grid-column:2;margin:3px 0 0 2px}
.bar{display:flex;align-items:center;justify-content:space-between;height:22px;margin:0 4px 0 9px;padding:4px 10px 0 8px;background:#4d4d4d;border:1px solid #262626}
.bar label{display:flex;align-items:center;gap:12px;margin-top:-2px}b{font-weight:600}
textarea{display:block;width:calc(100% - 22px);height:70px;margin:20px 4px 0 18px;padding:0 2px;background:#2a2a2a;border:1px solid #212121;border-top-color:#0d0d0d;border-radius:3px;color:#d2d2d2;resize:none;overflow:hidden}
.asset{display:flex;align-items:center;height:18px;background:#2a2a2a;border:1px solid #212121;border-radius:3px;padding:0 0 0 2px;color:#d2d2d2;overflow:hidden}
.asset span{flex:1;overflow:hidden;white-space:nowrap}.asset button{background:#323232;width:16px;flex:none}
.fs{display:grid;grid-template-columns:29px 31px 31px 32px 29px 31px 1fr;margin-left:-1px;height:17px}
.fs button{background:#565656;border:1px solid #2e2e2e;border-left-width:0;color:#e0e0e0}.fs button:nth-child(5){margin-left:2px}
.fs button:first-child,.fs button:nth-child(5){border-left-width:1px;border-radius:3px 0 0 3px}
.dim{color:#707070}.dim u-field{opacity:.45;width:48px}
.auto{display:grid;grid-template-columns:52px 55px 53px 1fr;--lw:25px;gap:1px;margin-left:-1px}
.auto :nth-child(2){--lw:30px;padding-left:2px}.auto :nth-child(3){--lw:37px}.auto :nth-child(4){--lw:29px}
.color{display:grid;grid-template-columns:1fr 18px;height:18px;border:1px solid #212121;border-radius:3px;overflow:hidden}
input[type=color]{width:100%;height:16px;border:0;padding:0;appearance:none}input[type=color]::-webkit-color-swatch-wrapper{padding:0}input[type=color]::-webkit-color-swatch{border:0}
.sp{display:grid;grid-template-columns:1fr 1fr;gap:6px;--lw:60px;margin-left:-1px}
.prev{display:flex;align-items:center;height:22px;background:#3c3c3c;border-top:1px solid #1e1e1e;border-bottom:1px solid #232323;flex:none;padding-left:4px}
.prev u-select{width:229px;height:20px;font-weight:600;border-left:1px solid #232323;--caret:4px;color:#d2d2d2}
.prev button{height:20px;width:26px;border-left:1px solid #232323}.prev .w{width:35px;gap:4px}.prev .k{width:17px}
.stage{height:154px;background:#313131;flex:none}.end{height:6px;background:#3c3c3c;border-top:1px solid #1e1e1e;flex:none}`, () => `
<u-tabbar lock><u-tab active near icon="info" size="14">Inspector</u-tab></u-tabbar>
<div class="view"><div class="scroll">
<div class="head"><div class="cube">${icon('cube', 22)}<u-caret></u-caret></div><div>
<div class="l1"><u-check on label="Active"></u-check><u-field value="Item Label"></u-field><u-check label="Static"></u-check><button>Static<u-caret></u-caret></button></div>
<div class="l2"><span>Tag</span><u-select label="Tag" value="Untagged"></u-select><span>Layer</span><u-select label="Layer" value="UI"></u-select></div></div></div>
<component-head icon="rectt" isize="14">Rect Transform</component-head>
<div class="top"><div class="anchor"><span class="hz">stretch</span><span class="vert">stretch</span>
<svg width="40" height="40" viewBox="0 0 40 40"><path d="M2.500 2.500h35v35h-35z" fill="#333" stroke="#777"/><path d="M12.500 11.500h16v16h-16z" fill="none" stroke="#999"/><path d="M20.500 13v14M13.500 19.500h14" stroke="#2397bd" stroke-width="1.500"/><path d="M20.500 11l3 4h-6zM20.500 28l3-4h-6zM12 19.500l4-3v6zM29 19.500l-4-3v6z" fill="#2397bd"/><path d="M1 1h3v3H1zM36 1h3v3h-3zM1 36h3v3H1zM36 36h3v3h-3z" fill="#c9a21f"/></svg></div>
<div class="xyz">${[['Left', 7], ['Top', 2], ['Pos Z', 0], ['Right', 8], ['Bottom', 1]].map(([l, v]) => `<u-field stack label="${l}" value="${v}"></u-field>`).join('')}<div class="pair"><button aria-label="Blueprint mode">${icon('dashed', 14)}</button><button>R</button></div></div></div>
<div class="anch"><u-caret dir="tree"></u-caret><span>Anchors</span></div>
<div class="row r in" style="margin-top:0"><span>Min</span>${vec([0, 0])}</div>
<div class="row r in"><span>Max</span>${vec([1, 1])}</div>
<div class="row r" style="margin-top:4px"><span>Pivot</span>${vec(['0.5', '0.5'])}</div>
<div class="row r" style="margin-top:10px"><span>Rotation</span>${vec([0, 0, 0], 't')}</div>
<div class="row r" style="margin-bottom:9px"><span>Scale</span>${vec([1, 1, 1], 't')}</div>
<component-head icon="eye">Canvas Renderer</component-head>
<div class="row" style="margin:4px 0 9px"><span>Cull Transparent Mesh</span><u-check on label="Cull Transparent Mesh"></u-check></div>
<component-head icon="tmp" toggle>TextMeshPro - Text (UI)</component-head>
<div class="bar" style="margin-top:12px"><b>Text Input</b><label>Enable RTL Editor<u-check label="Enable RTL Editor"></u-check></label></div>
<textarea aria-label="Text">Option A</textarea>
<div class="row" style="margin-bottom:1px"><span>Text Style</span><u-select label="Text Style" value="Normal"></u-select></div>
<div class="bar"><b>Main Settings</b></div>
<div class="row"><span>Font Asset</span><div class="asset">${icon('fasset', 13)}<span>LiberationSans SDF (TMP_Font Asset)</span><button aria-label="Pick font">${icon('target', 13)}</button></div></div>
<div class="row"><span>Material Preset</span><u-select style="font-size:11px" label="Material Preset" value="LiberationSans SDF Material"></u-select></div>
<div class="row" style="margin-top:1px"><span>Font Style</span><div class="fs">${['B', 'I', 'U', 'S', 'ab', 'AB', 'SC'].map(t => `<button>${t}</button>`).join('')}</div></div>
<div class="row dim" style="margin-top:3px"><span>Font Size</span><u-field value="32"></u-field></div>
<div class="row in"><span>Auto Size</span><u-check on label="Auto Size"></u-check></div>
<div class="row in"><span>Auto Size Options</span><div class="auto"><u-field label="Min" value="24"></u-field><u-field label="Max" value="32"></u-field><u-field label="WD%" value="0"></u-field><u-field label="Line" value="0"></u-field></div></div>
<div class="row" style="margin-top:10px"><label for="vc">Vertex Color</label><div class="color"><input id="vc" type="color" value="#ffffff"><button aria-label="Pick color">${icon('picker', 14)}</button></div></div>
<div class="row"><span>Color Gradient</span><u-check label="Color Gradient"></u-check></div>
<div class="row"><span>Override Tags</span><u-check label="Override Tags"></u-check></div>
<div class="row" style="margin-top:9px"><span>Spacing Options (em)</span><div class="sp"><u-field label="Character" value="0"></u-field><u-field label="Word" value="0"></u-field></div></div>
</div><div class="rail"><u-caret dir="up"></u-caret><i></i><u-caret></u-caret></div></div>
<div class="prev"><u-select flat label="Preview" value="Stencil Id:1, Op:Keep, Comp:Equal, WriteMask:0"></u-select><button aria-label="Resize">${icon('grip', 20)}</button><button aria-label="Play">${icon('play', 15)}</button><button aria-label="Stop">${icon('stop')}</button><button aria-label="Lights">${icon('dots', 14)}</button><button class="w" aria-label="Shape">${icon('ball', 13)}<u-caret></u-caret></button><button class="k" aria-label="More">${icon('kebab', 14)}</button></div>
<div class="stage"></div><div class="end"></div>`);

define('status-bar', `:host{display:flex;justify-content:flex-end;align-items:center;height:22px;background:#191919;flex:none;padding-right:1px}
button{width:26px;height:20px;border-left:1px solid #252525}`, () => ['bug', 'cache', 'lightoff', 'ok'].map(n => `<button aria-label="${n}">${icon(n, 15)}</button>`).join(''));

define('unity-editor', `
:host{display:flex;flex-direction:column;height:100vh;min-width:1200px;overflow:hidden}
.work{display:grid;grid-template-columns:minmax(0,1fr) 388px;flex:1;min-height:0}
.left{display:grid;grid-template-columns:380px minmax(0,1fr);grid-template-rows:minmax(0,569fr) minmax(0,376fr);min-height:0}
scene-panel{border-right:2px solid #191919}`, () => `
<window-frame></window-frame><main-toolbar></main-toolbar>
<div class="work"><div class="left"><hierarchy-panel></hierarchy-panel><scene-panel></scene-panel><project-panel></project-panel></div><inspector-panel></inspector-panel></div>
<status-bar></status-bar>`);
</script>
</body>
</html>
